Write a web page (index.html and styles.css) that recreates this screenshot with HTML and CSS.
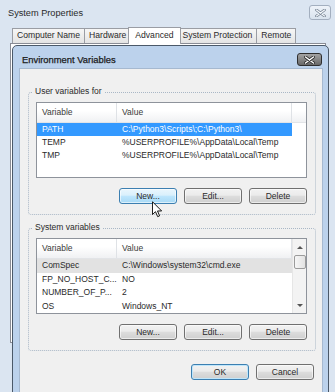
FILE: index.html
```html
<!DOCTYPE html>
<html>
<head>
<meta charset="utf-8">
<link rel="stylesheet" href="styles.css">
</head>
<body>
<div class="desk">
  <div class="sysprops">
    <div class="sp-titlebar">
      <span class="sp-title">System Properties</span>
      <span class="sp-close"><svg width="11" height="8" viewBox="0 0 11 8"><path d="M1.5 1 L9.5 7 M9.5 1 L1.5 7" stroke="#7a8796" stroke-width="2.8" stroke-linecap="round"/><path d="M1.5 1 L9.5 7 M9.5 1 L1.5 7" stroke="#f4f7fb" stroke-width="1.2" stroke-linecap="round"/></svg></span>
    </div>
    <div class="tabs">
      <span class="tab">Computer Name</span>
      <span class="tab">Hardware</span>
      <span class="tab sel">Advanced</span>
      <span class="tab">System Protection</span>
      <span class="tab">Remote</span>
    </div>
    <div class="panel"></div>
  </div>

  <div class="env">
    <div class="env-titlebar">
      <span class="env-title">Environment Variables</span>
      <span class="env-close"><svg width="11" height="8" viewBox="0 0 11 8"><path d="M1.5 1 L9.5 7 M9.5 1 L1.5 7" stroke="#2a2a2a" stroke-width="3" stroke-linecap="round"/><path d="M1.5 1 L9.5 7 M9.5 1 L1.5 7" stroke="#ffffff" stroke-width="1.5" stroke-linecap="round"/></svg></span>
    </div>
    <div class="env-body">
      <div class="group">
        <div class="group-label">User variables for</div>
        <div class="list">
          <div class="list-main">
            <div class="hdr">
              <div class="hdr-cell c1">Variable</div>
              <div class="hdr-cell c2">Value</div>
              <div class="filler"></div>
            </div>
            <div class="row sel"><div class="cell c1">PATH</div><div class="cell c2">C:\Python3\Scripts\;C:\Python3\</div></div>
            <div class="row"><div class="cell c1">TEMP</div><div class="cell c2">%USERPROFILE%\AppData\Local\Temp</div></div>
            <div class="row"><div class="cell c1">TMP</div><div class="cell c2">%USERPROFILE%\AppData\Local\Temp</div></div>
          </div>
        </div>
        <div class="btns">
          <span class="btn hover">New...</span>
          <span class="btn">Edit...</span>
          <span class="btn">Delete</span>
        </div>
      </div>

      <div class="group second">
        <div class="group-label">System variables</div>
        <div class="list tall">
          <div class="list-main">
            <div class="hdr">
              <div class="hdr-cell c1">Variable</div>
              <div class="hdr-cell c2">Value</div>
            </div>
            <div class="row inactive"><div class="cell c1">ComSpec</div><div class="cell c2">C:\Windows\system32\cmd.exe</div></div>
            <div class="row"><div class="cell c1">FP_NO_HOST_C...</div><div class="cell c2">NO</div></div>
            <div class="row"><div class="cell c1">NUMBER_OF_P...</div><div class="cell c2">2</div></div>
            <div class="row"><div class="cell c1">OS</div><div class="cell c2">Windows_NT</div></div>
          </div>
          <div class="vscroll">
            <div class="sb-btn"><span class="arrow-up"></span></div>
            <div class="thumb"></div>
            <div class="track"></div>
            <div class="sb-btn"><span class="arrow-down"></span></div>
          </div>
        </div>
        <div class="btns">
          <span class="btn">New...</span>
          <span class="btn">Edit...</span>
          <span class="btn">Delete</span>
        </div>
      </div>

      <div class="btns dlg-btns">
        <span class="btn default">OK</span>
        <span class="btn">Cancel</span>
      </div>
    </div>
  </div>

  <svg class="cursor" width="11" height="17" viewBox="0 0 12 18"><path d="M0.5 0.5 L0.5 14.5 L3.8 11.4 L6.2 16.8 L8.3 15.9 L6 10.6 L10.5 10.6 Z" fill="#ffffff" stroke="#000000" stroke-width="1" stroke-linejoin="miter"/></svg>
</div>
</body>
</html>
```

FILE: styles.css
```css
* { box-sizing: border-box; }
html, body { margin: 0; padding: 0; }
body {
  width: 335px;
  height: 392px;
  overflow: hidden;
  background: #dbe5f1;
  font-family: "Liberation Sans", Arial, sans-serif;
  font-size: 8.5px;
  color: #2a2a2a;
}
.desk { position: relative; width: 335px; height: 392px; }

/* outer System Properties window */
.sp-titlebar {
  height: 27px;
  display: flex;
  align-items: center;
  justify-content: space-between;
  padding: 0 4px 1px 8px;
}
.sp-title { font-size: 9.2px; color: #2a2a2a; }
.sp-close {
  width: 22px;
  height: 15px;
  margin-top: -1px;
  border: 1px solid #a3afbf;
  border-radius: 3px;
  background: linear-gradient(#eef3f9, #d9e3ee);
  display: flex;
  align-items: center;
  justify-content: center;
}
.tabs {
  display: flex;
  align-items: flex-end;
  height: 16px;
  padding-left: 12px;
}
.tab {
  height: 15px;
  padding: 0 4px;
  margin-left: -1px;
  border: 1px solid #9a9da4;
  border-bottom: 0;
  background: linear-gradient(#f6f6f6, #e4e4e4);
  font-size: 8.6px;
  line-height: 13px;
  color: #2a2a2a;
  white-space: nowrap;
}
.tab:first-child { margin-left: 0; }
.tab.sel {
  height: 17px;
  margin: 0 -2px -1px -3px;
  padding: 0 6px;
  background: #ffffff;
  line-height: 14px;
  position: relative;
  z-index: 1;
}
.panel {
  margin-left: 10px;
  width: 316px;
  height: 300px;
  border: 1px solid #898c95;
  background: #ffffff;
}

/* Environment Variables dialog (window on top) */
.env {
  position: absolute;
  left: 12px;
  top: 45px;
  width: 317px;
  height: 360px;
  border: 1px solid #4b5969;
  border-radius: 5px 5px 0 0;
  background: #bcd2ec;
  padding: 0 5px 0 6px;
}
.env-titlebar {
  height: 22px;
  display: flex;
  align-items: flex-end;
  justify-content: space-between;
  padding: 0 1px 2px 3px;
}
.env-title {
  font-size: 9.4px;
  line-height: 13px;
  color: #1b1b1b;
  -webkit-text-stroke: 0.25px #1b1b1b;
}
.env-close {
  width: 25px;
  height: 13px;
  border: 1px solid #2e2e2e;
  border-radius: 3px;
  background: linear-gradient(#a3a3a3, #686868);
  display: flex;
  align-items: center;
  justify-content: center;
}
.env-body {
  height: 330px;
  background: #f0f0f0;
  border: 1px solid #a6b9d0;
  padding: 0 6px 0 8px;
  display: flex;
  flex-direction: column;
}

/* group boxes */
.group {
  margin-top: 23px;
  border: 1px dotted #a9b7c6;
  border-radius: 3px;
  padding: 0 8px 10px 7px;
  display: flex;
  flex-direction: column;
}
.group.second { margin-top: 13px; }
.group-label {
  align-self: flex-start;
  margin: -7px 0 0 -3px;
  padding: 0 2px;
  background: #f0f0f0;
  line-height: 11px;
}

/* list views */
.list {
  margin-top: 5px;
  height: 76px;
  border: 1px solid #8e939b;
  background: #ffffff;
  display: flex;
}
.list-main { flex: 1; min-width: 0; }
.hdr {
  display: flex;
  height: 20px;
  background: linear-gradient(#ffffff 40%, #f0f1f3);
  border-bottom: 1px solid #e2e4e7;
}
.hdr-cell {
  padding-left: 5px;
  line-height: 19px;
  border-right: 1px solid #dfe2e6;
  color: #3a3a3a;
}
.hdr .filler { flex: 1; }
.c1 { width: 80px; flex: none; }
.c2 { width: 175px; flex: none; }
.row {
  display: flex;
  width: 255px;
  height: 13px;
  line-height: 13px;
}
.tall .row { height: 13.5px; line-height: 13.5px; }
.row.sel { background: #3399ff; color: #ffffff; }
.row.inactive { background: #e2e2e2; }
.cell {
  padding-left: 5px;
  white-space: nowrap;
  overflow: hidden;
}

/* scrollbar */
.vscroll {
  width: 14px;
  flex: none;
  background: #f3f3f3;
  border-left: 1px solid #e6e6e6;
  display: flex;
  flex-direction: column;
  align-items: center;
}
.sb-btn {
  height: 16px;
  width: 100%;
  display: flex;
  align-items: center;
  justify-content: center;
}
.arrow-up {
  width: 0; height: 0;
  border-left: 3px solid transparent;
  border-right: 3px solid transparent;
  border-bottom: 3px solid #555;
}
.arrow-down {
  width: 0; height: 0;
  border-left: 3px solid transparent;
  border-right: 3px solid transparent;
  border-top: 3px solid #555;
}
.thumb {
  width: 12px;
  height: 14px;
  border: 1px solid #9b9b9b;
  border-radius: 2px;
  background: linear-gradient(90deg, #f6f6f6, #e2e2e2);
}
.track { flex: 1; }

/* buttons */
.btns {
  display: flex;
  justify-content: flex-end;
  gap: 7px;
  margin-top: 10px;
}
.btn {
  width: 58px;
  height: 16px;
  border: 1px solid #707070;
  border-radius: 3px;
  background: linear-gradient(#f2f2f2 0%, #ebebeb 45%, #dddddd 50%, #cfcfcf 100%);
  box-shadow: inset 0 0 0 1px rgba(255, 255, 255, 0.6);
  display: flex;
  align-items: center;
  justify-content: center;
}
.btn.hover {
  border-color: #3c7fb1;
  background: linear-gradient(#eaf6fd 0%, #d9f0fc 45%, #bee6fd 50%, #a7d9f5 100%);
}
.btn.default {
  border-color: #3c7fb1;
  box-shadow: inset 0 0 0 1px #bfe6fb;
}
.dlg-btns {
  margin-top: 13px;
  margin-right: 2px;
}

/* mouse pointer overlay */
.cursor {
  position: absolute;
  left: 152px;
  top: 201px;
}
```
